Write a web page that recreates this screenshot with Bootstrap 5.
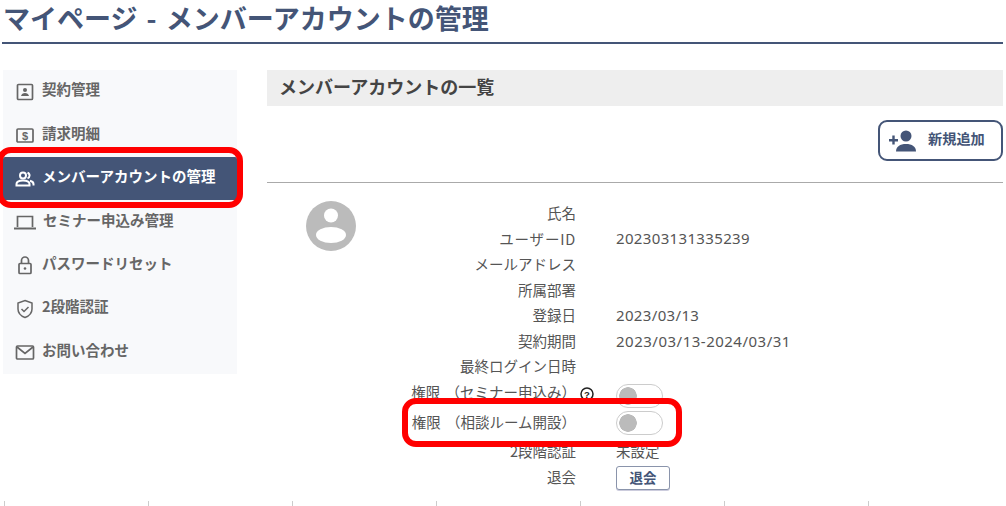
<!DOCTYPE html>
<html lang="ja">
<head>
<meta charset="utf-8">
<title>マイページ</title>
<link href="https://cdn.jsdelivr.net/npm/bootstrap@5.3.0/dist/css/bootstrap.min.css" rel="stylesheet">
<style>
html,body{height:506px;overflow:hidden}
body{position:relative;width:1006px;background:#fff;color:#555;font-family:"Noto Sans CJK JP","Noto Sans",sans-serif;font-size:14px}
.page-wrap{padding:0 3px 0 3px}
.page-title{font-size:27px;word-spacing:3px;font-weight:700;color:#445577;line-height:36px;margin:0;height:44px;border-bottom:2px solid #445577;margin-left:-1px;padding-left:1px;white-space:nowrap}
.side-menu{width:234px;margin-top:26px;background:#f8f9fb;flex:none}
.side-item{height:43.43px;display:flex;align-items:center;gap:7px;padding-left:12px;color:#666;font-weight:700;font-size:14.5px;text-decoration:none;white-space:nowrap}
.side-item span{margin-bottom:5px}
.side-item svg{width:20px;height:20px;flex:none;color:#666}
.side-item.on{background:#445577;color:#fff;border-radius:2px}
.side-item.on svg{color:#fff}
.side-item .wide-icon{width:22px;margin-left:-1px;margin-right:0}
.main-pane{margin-left:30px;margin-top:26px;width:736px;flex:none}
.list-head{height:36px;background:#eee;font-size:18px;font-weight:700;color:#444;line-height:32px;padding-left:12px}
.add-row{height:77px;border-bottom:1px solid #aaa;display:flex;justify-content:flex-end;align-items:flex-start;padding-top:14px}
.add-btn{width:125px;height:41px;border:2px solid #445577;border-radius:9px;background:#fff;color:#445577;font-weight:700;font-size:14.2px;display:flex;align-items:center;padding:0 0 0 9px;gap:11px}
.add-btn svg{width:28px;height:22px;flex:none}
.add-btn span{margin-bottom:4px}
.detail{padding-top:17px}
.user-pic{width:50px;height:50px;margin-left:39px;margin-top:1px;flex:none}
.info-list{margin-left:0;width:600px}
.info-row{display:flex;height:25.6px;align-items:center;font-size:14.5px;color:#555}
.info-row.seminar{height:26px}
.info-row.tall{height:33px}
.info-row.mid{height:26px}
.info-key{width:220px;text-align:right;flex:none;white-space:nowrap;position:relative}
.key-wide{letter-spacing:.8px}
.key-perm{word-spacing:2px}
.info-val{margin-left:40px;white-space:nowrap;font-family:"Noto Sans","Noto Sans CJK JP",sans-serif;font-size:15px;letter-spacing:.35px}
.val-range{letter-spacing:.5px}
.jp-val{font-family:"Noto Sans CJK JP",sans-serif;font-size:14.5px;letter-spacing:0}
.help-mark{position:absolute;right:-18px;top:50%;width:14px;height:14px;margin-top:-5px}
.toggle-wrap.form-switch{padding:0;margin:0;min-height:0;display:flex}
.toggle-low.form-switch{margin-top:8px}
.toggle-mid.form-switch{margin-top:3px}
.form-switch .toggle-in{width:47px;height:24px;margin:0;background-color:#fff;border:1px solid #ccc;border-radius:12px;background-image:radial-gradient(circle,#bbb 8.5px,transparent 9px);background-position:left center;background-size:22px 22px;background-repeat:no-repeat;box-shadow:none}
.leave-btn{width:54px;height:24px;padding:0;margin-top:2px;border:1px solid #8a94ab;border-radius:3px;background:#fff;color:#445577;font-weight:700;font-size:13.5px;line-height:22px;box-shadow:0 1px 0 #ccd;display:block}
.red-frame{position:absolute;border:6px solid #f00;border-radius:14px;pointer-events:none}
.tick-row{position:absolute;left:4px;top:501px;display:flex;gap:143px}
.tick-row span{display:block;width:1px;height:5px;background:#ccc}
</style>
</head>
<body>
<div class="page-wrap">
  <h1 class="page-title">マイページ - メンバーアカウントの管理</h1>
  <div class="d-flex align-items-start">
    <nav class="side-menu">
      <a class="side-item" href="#"><svg viewBox="0 0 20 20" fill="none" stroke="currentColor" stroke-width="1.7"><rect x="2.5" y="2.5" width="15" height="15" rx="1"/><circle cx="10" cy="8" r="2" fill="currentColor" stroke="none"/><path d="M6 14c.5-2 2-3 4-3s3.500 1 4 3z" fill="currentColor" stroke="none"/></svg><span>契約管理</span></a>
      <a class="side-item" href="#"><svg viewBox="0 0 20 20" fill="none" stroke="currentColor" stroke-width="1.7"><rect x="2" y="4" width="16" height="13" rx="1"/><text x="10" y="15" text-anchor="middle" font-size="11" font-weight="700" fill="currentColor" stroke="none" font-family="Liberation Sans">$</text></svg><span>請求明細</span></a>
      <a class="side-item on" href="#"><svg viewBox="0 0 20 20" fill="none" stroke="currentColor" stroke-width="2"><circle cx="8" cy="6.500" r="3"/><path d="M1.500 16.500v-1.500c0-2 2.500-3.500 6.500-3.500s6.500 1.500 6.500 3.500v1.500z"/><path d="M12.500 3.700a3 3 0 0 1 0 5.700M15 11.800c2 .5 3.500 1.700 3.500 3.200v1.500"/></svg><span>メンバーアカウントの管理</span></a>
      <a class="side-item" href="#"><svg class="wide-icon" viewBox="0 0 22 20" fill="none" stroke="currentColor" stroke-width="1.7"><path d="M3.500 15V4.500h15V15"/><path d="M0 16.500h22" stroke-width="2"/></svg><span>セミナー申込み管理</span></a>
      <a class="side-item" href="#"><svg viewBox="0 0 20 20" fill="none" stroke="currentColor" stroke-width="1.7"><rect x="4" y="8.500" width="12" height="10" rx="1"/><path d="M6.500 8.500V5.500a3.500 3.500 0 0 1 7 0v3"/><circle cx="10" cy="13.500" r="1.300" fill="currentColor" stroke="none"/></svg><span>パスワードリセット</span></a>
      <a class="side-item" href="#"><svg viewBox="0 0 20 20" fill="none" stroke="currentColor" stroke-width="1.500"><path d="M10 1.500l7 2.500v6c0 4-3 7-7 8.500-4-1.500-7-4.500-7-8.500V4z"/><path d="M6.500 10l2.500 2.500 4.500-4.500"/></svg><span>2段階認証</span></a>
      <a class="side-item" href="#"><svg viewBox="0 0 20 20" fill="none" stroke="currentColor" stroke-width="1.700"><rect x="1.500" y="4" width="17" height="13" rx="1"/><path d="M2 5l8 6.500L18 5"/></svg><span>お問い合わせ</span></a>
    </nav>
    <main class="main-pane">
      <div class="list-head">メンバーアカウントの一覧</div>
      <div class="add-row">
        <button class="add-btn" type="button"><svg viewBox="0 0 28 22" fill="#445577"><circle cx="17" cy="6" r="5.500"/><path d="M7 21.500c0-5 4-7.500 10-7.500s10 2.500 10 7.500z"/><path d="M0 9h9v2.400H0zM3.300 5.500h2.400v9H3.300z"/></svg><span>新規追加</span></button>
      </div>
      <div class="detail d-flex">
        <svg class="user-pic" viewBox="0 0 50 50"><circle cx="25" cy="25" r="25" fill="#bbb"/><circle cx="25" cy="14.500" r="7" fill="#fff"/><ellipse cx="25" cy="34" rx="15" ry="8" fill="#fff"/></svg>
        <div class="info-list">
          <div class="info-row"><div class="info-key">氏名</div></div>
          <div class="info-row"><div class="info-key key-wide">ユーザーID</div><div class="info-val">202303131335239</div></div>
          <div class="info-row"><div class="info-key">メールアドレス</div></div>
          <div class="info-row"><div class="info-key">所属部署</div></div>
          <div class="info-row"><div class="info-key">登録日</div><div class="info-val">2023/03/13</div></div>
          <div class="info-row"><div class="info-key">契約期間</div><div class="info-val val-range">2023/03/13-2024/03/31</div></div>
          <div class="info-row"><div class="info-key">最終ログイン日時</div></div>
          <div class="info-row seminar"><div class="info-key key-perm">権限 （セミナー申込み）<svg class="help-mark" viewBox="0 0 14 14" fill="none" stroke="#222" stroke-width="1.500"><circle cx="7" cy="7" r="6"/><text x="7" y="10.500" text-anchor="middle" font-size="9.500" font-weight="700" fill="#222" stroke="none" font-family="Liberation Sans">?</text></svg></div><div class="info-val"><div class="form-check form-switch toggle-wrap toggle-low"><input class="form-check-input toggle-in" type="checkbox" role="switch" aria-label="権限（セミナー申込み）"></div></div></div>
          <div class="info-row tall"><div class="info-key key-perm">権限 （相談ルーム開設）</div><div class="info-val"><div class="form-check form-switch toggle-wrap toggle-mid"><input class="form-check-input toggle-in" type="checkbox" role="switch" aria-label="権限（相談ルーム開設）"></div></div></div>
          <div class="info-row mid"><div class="info-key">2段階認証</div><div class="info-val jp-val">未設定</div></div>
          <div class="info-row"><div class="info-key">退会</div><div class="info-val"><button class="leave-btn" type="button">退会</button></div></div>
        </div>
      </div>
    </main>
  </div>
</div>
<div class="red-frame" style="left:-3px;top:147px;width:246px;height:60.5px"></div>
<div class="red-frame" style="left:402px;top:398px;width:280px;height:49px"></div>
<div class="tick-row"><span></span><span></span><span></span><span></span><span></span><span></span><span></span></div>
</body>
</html>
